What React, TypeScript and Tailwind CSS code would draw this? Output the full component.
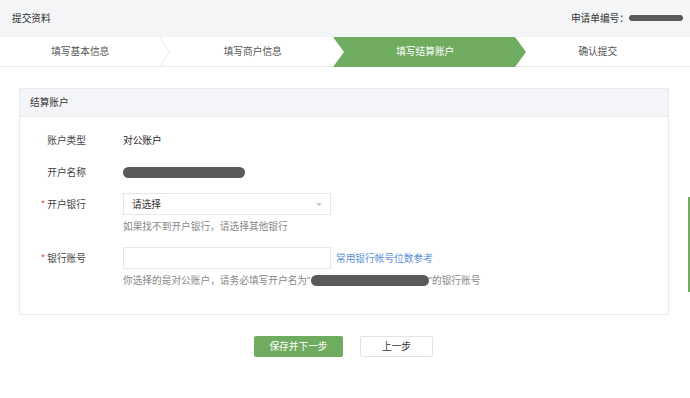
const Blob = ({ className }: { className: string }) => (
  <span className={`inline-block rounded-full bg-[#5a5a5a] blur-[0.6px] ${className}`} />
);

const steps = ["填写基本信息", "填写商户信息", "填写结算账户", "确认提交"];

const App = () => {
  return (
    <div
      className="relative w-[690px] h-[398px] overflow-hidden bg-white text-[9.7px] text-[#333]"
      style={{ fontFamily: '"Noto Sans CJK SC", "Noto Sans", sans-serif' }}
    >
      {/* top bar */}
      <div className="h-[37px] bg-[#f4f5f7] flex items-center justify-between pl-3 pr-[7px]">
        <span className="text-[#333]">提交资料</span>
        <div className="flex items-center">
          <span className="text-[#333]">申请单编号：</span>
          <Blob className="w-[54px] h-[6px]" />
        </div>
      </div>

      {/* steps */}
      <div className="relative h-[30px] bg-white border-b border-[#ececec]">
        <svg className="absolute inset-0" width="690" height="30" viewBox="0 0 690 30">
          <polyline points="160,0 169,15 160,30" fill="none" stroke="#ececec" strokeWidth="1" />
          <polygon points="333,0 515,0 526,15 515,30 333,30 344,15" fill="#6fac5f" />
        </svg>
        <div className="relative grid grid-cols-4 h-full">
          {steps.map((s, i) => (
            <div
              key={s}
              className={`flex items-center justify-center pr-3 ${i === 2 ? "text-white" : "text-[#555]"}`}
            >
              {s}
            </div>
          ))}
        </div>
      </div>

      {/* panel */}
      <div className="ml-[19px] mt-[21px] w-[650px] border border-[#ebebeb]">
        <div className="h-[28px] bg-[#f4f5f8] border-b border-[#ebebeb] flex items-center pl-[10px] text-[#333]">
          结算账户
        </div>
        <div className="pt-[13px] pb-[28px]">
          <div className="flex items-center h-[20px]">
            <div className="w-[66px] text-right text-[#444]">账户类型</div>
            <div className="ml-[37px] text-[#222]">对公账户</div>
          </div>
          <div className="flex items-center h-[20px] mt-[12px]">
            <div className="w-[66px] text-right text-[#444]">开户名称</div>
            <div className="ml-[37px] flex items-center">
              <Blob className="w-[122px] h-[11px]" />
            </div>
          </div>
          <div className="flex items-center h-[22px] mt-[11px]">
            <div className="w-[66px] text-right text-[#444]">
              <span className="text-[#e0524e] mr-[2px]">*</span>开户银行
            </div>
            <div className="ml-[37px] w-[208px] h-[22px] border border-[#e6e6e6] flex items-center justify-between pl-[8px] pr-[8px] text-[#333]">
              <span>请选择</span>
              <span className="w-0 h-0 border-l-[3px] border-r-[3px] border-t-[3px] border-l-transparent border-r-transparent border-t-[#c4c4c4]" />
            </div>
          </div>
          <div className="ml-[103px] mt-[5px] h-[12px] flex items-center text-[#888]">
            如果找不到开户银行，请选择其他银行
          </div>
          <div className="flex items-center h-[22px] mt-[15px]">
            <div className="w-[66px] text-right text-[#444]">
              <span className="text-[#e0524e] mr-[2px]">*</span>银行账号
            </div>
            <div className="ml-[37px] w-[208px] h-[22px] border border-[#e6e6e6]" />
            <span className="ml-[5px] text-[#5b8fd8]">常用银行帐号位数参考</span>
          </div>
          <div className="ml-[103px] mt-[5px] h-[12px] flex items-center text-[#888]">
            你选择的是对公账户，请务必填写开户名为
            <span className="font-['Liberation_Sans']">"</span>
            <Blob className="w-[118px] h-[11px]" />
            <span className="font-['Liberation_Sans']">"</span>
            的银行账号
          </div>
        </div>
      </div>

      {/* buttons */}
      <div className="flex justify-center gap-[17px] mt-[21px] pr-[3px]">
        <button className="w-[89px] h-[21px] bg-[#6fac5f] text-white rounded-[2px]">保存并下一步</button>
        <button className="w-[73px] h-[21px] bg-white border border-[#e3e3e3] text-[#333] rounded-[2px]">上一步</button>
      </div>

      <div className="absolute right-0 top-[197px] w-[2px] h-[95px] bg-[#6fac5f]" />
    </div>
  );
};

export default App;
